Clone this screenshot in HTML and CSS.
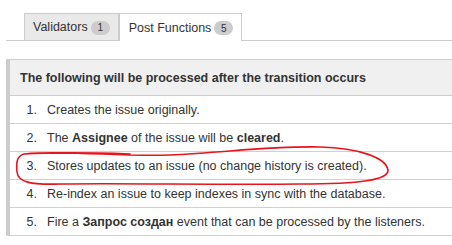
FILE: index.html
```html
<!DOCTYPE html>
<html>
<head>
<meta charset="utf-8">
<link rel="stylesheet" href="styles.css">
</head>
<body>
<div class="page">
  <div class="tabs">
    <div class="tab">Validators <span class="badge">1</span></div>
    <div class="tab active">Post Functions <span class="badge">5</span></div>
  </div>
  <div class="panel">
    <div class="panel-head">The following will be processed after the transition occurs</div>
    <div class="row"><span class="num">1.</span><span>Creates the issue originally.</span></div>
    <div class="row"><span class="num">2.</span><span>The <b>Assignee</b> of the issue will be <b>cleared</b>.</span></div>
    <div class="row"><span class="num">3.</span><span>Stores updates to an issue (no change history is created).</span></div>
    <div class="row"><span class="num">4.</span><span>Re-index an issue to keep indexes in sync with the database.</span></div>
    <div class="row"><span class="num">5.</span><span>Fire a <b>Запрос создан</b> event that can be processed by the listeners.</span></div>
  </div>
</div>
<svg class="annot" width="452" height="245" viewBox="0 0 452 245">
  <path d="M24 154 C 70 150, 120 157, 170 155 C 230 152, 270 146, 320 147 C 360 148, 386 158, 388 170 C 389 180, 360 184, 300 184 C 220 185, 120 183, 60 184 C 30 185, 18 182, 17 172 C 16 162, 17 156, 24 154 C 60 152, 100 153, 130 154"
        fill="none" stroke="#e8141b" stroke-width="1.6" stroke-linecap="round"/>
</svg>
</body>
</html>
```
FILE: styles.css
```css
html, body {
  margin: 0;
  padding: 0;
  background: #fff;
  overflow: hidden;
}
body {
  position: relative;
  font-family: "Liberation Sans", Arial, sans-serif;
  font-size: 12.5px;
  color: #333;
}
.page {
  padding-top: 13px;
  padding-left: 6px;
}
.tabs {
  display: flex;
  border-bottom: 1px solid #ccc;
  padding-left: 18px;
  height: 27px;
}
.tab {
  box-sizing: border-box;
  height: 27px;
  border: 1px solid #ccc;
  border-bottom: none;
  background: #e9e9e9;
  padding: 0 8px;
  display: flex;
  align-items: center;
  gap: 3px;
}
.tab.active {
  background: #fff;
  height: 28px;
  margin-bottom: -1px;
  padding: 0 8px 0 9px;
  position: relative;
}
.badge {
  display: inline-flex;
  align-items: center;
  justify-content: center;
  min-width: 19px;
  height: 14px;
  border-radius: 7px;
  background: #ccc;
  color: #333;
  font-size: 10px;
  margin-top: 1px;
}
.panel {
  margin-top: 18px;
  margin-right: -12px;
  border-top: 1px solid #ccc;
  border-left: 4px solid #ccc;
  border-bottom-left-radius: 2px;
}
.panel-head {
  height: 36px;
  box-sizing: border-box;
  background: #f0f0f0;
  border-bottom: 1px solid #ccc;
  display: flex;
  align-items: center;
  padding-left: 10px;
  font-weight: bold;
  padding-top: 1px;
}
.row {
  height: 27px;
  border-bottom: 1px solid #d0d0d0;
  display: flex;
  align-items: center;
}
.num {
  width: 27px;
  text-align: right;
  margin-right: 10px;
}
.row b {
  font-weight: bold;
}
.annot {
  position: absolute;
  left: 0;
  top: 0;
  pointer-events: none;
}
```
